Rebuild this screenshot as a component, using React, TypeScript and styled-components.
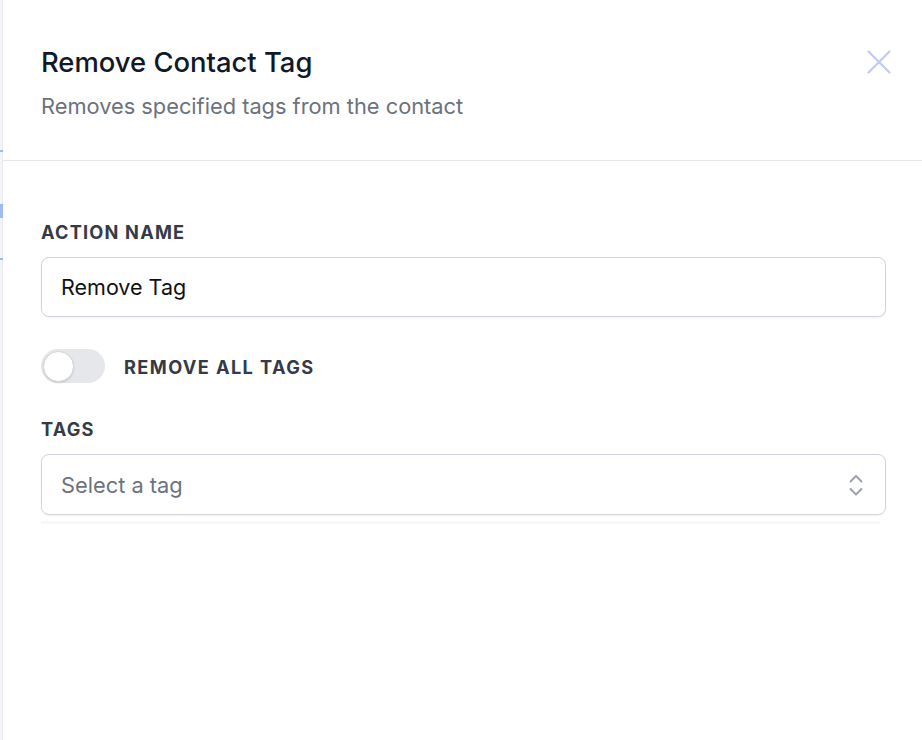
import styled, { createGlobalStyle } from "styled-components";

const GlobalStyle = createGlobalStyle`
  html, body {
    margin: 0;
    padding: 0;
    background: #ffffff;
  }
  body {
    font-family: Inter, "Noto Sans", "Liberation Sans", sans-serif;
    -webkit-font-smoothing: antialiased;
  }
  * {
    box-sizing: border-box;
  }
`;

export default function App() {
  return (
    <>
      <GlobalStyle />
      <Screen>
        <Backdrop>
          <BackdropMark $top={150} $height={2} />
          <BackdropMark $top={52} $height={14} />
          <BackdropMark $top={40} $height={2} />
        </Backdrop>
        <Panel>
          <Header>
            <HeaderText>
              <Title>Remove Contact Tag</Title>
              <Subtitle>Removes specified tags from the contact</Subtitle>
            </HeaderText>
            <CloseButton aria-label="Close">
              <svg width="24" height="24" viewBox="0 0 24 24" fill="none">
                <path
                  d="M1.5 1.5L22.5 22.5M22.5 1.5L1.5 22.5"
                  stroke="currentColor"
                  strokeWidth="2.2"
                  strokeLinecap="round"
                />
              </svg>
            </CloseButton>
          </Header>
          <Body>
            <Field>
              <Label>Action Name</Label>
              <TextInput defaultValue="Remove Tag" />
            </Field>
            <ToggleRow>
              <Toggle role="switch" aria-checked="false">
                <Knob />
              </Toggle>
              <ToggleLabel>Remove All Tags</ToggleLabel>
            </ToggleRow>
            <Field>
              <Label>Tags</Label>
              <SelectBox>
                <Placeholder>Select a tag</Placeholder>
                <svg width="16" height="24" viewBox="0 0 16 24" fill="none">
                  <path
                    d="M2.5 8.5L8 3L13.5 8.5M2.5 16L8 21.5L13.5 16"
                    stroke="#9ca3af"
                    strokeWidth="2"
                    strokeLinecap="round"
                    strokeLinejoin="round"
                  />
                </svg>
              </SelectBox>
              <DropHint />
            </Field>
          </Body>
        </Panel>
      </Screen>
    </>
  );
}

const Screen = styled.div`
  display: flex;
  width: 100%;
  height: 100vh;
  overflow: hidden;
`;

const Backdrop = styled.div`
  width: 3px;
  flex-shrink: 0;
  display: flex;
  flex-direction: column;
  background: #f4f5f9;
  border-right: 1px solid #e8eaf0;
`;

const BackdropMark = styled.div<{ $top: number; $height: number }>`
  margin-top: ${(p) => p.$top}px;
  height: ${(p) => p.$height}px;
  width: 3px;
  background: #7aa2f0;
  opacity: 0.7;
`;

const Panel = styled.div`
  flex: 1;
  display: flex;
  flex-direction: column;
  background: #ffffff;
`;

const Header = styled.div`
  display: flex;
  justify-content: space-between;
  align-items: flex-start;
  padding: 44px 31px 39px 38px;
  border-bottom: 1px solid #e5e7eb;
`;

const HeaderText = styled.div`
  display: flex;
  flex-direction: column;
  gap: 11px;
`;

const Title = styled.h2`
  margin: 0;
  font-size: 27.4px;
  line-height: 36px;
  font-weight: 500;
  color: #111827;
`;

const Subtitle = styled.p`
  margin: 0;
  font-size: 21.8px;
  line-height: 30px;
  color: #6b7280;
`;

const CloseButton = styled.button`
  border: none;
  background: none;
  padding: 0;
  margin-top: 6px;
  color: #c3c8fa;
  cursor: pointer;
  display: flex;
`;

const Body = styled.div`
  display: flex;
  flex-direction: column;
  padding: 59px 36px 0 38px;
`;

const Field = styled.div`
  display: flex;
  flex-direction: column;
`;

const Label = styled.label`
  font-size: 18.2px;
  line-height: 25px;
  font-weight: 700;
  letter-spacing: 1.2px;
  text-transform: uppercase;
  color: #343a46;
  margin-bottom: 12px;
`;

const TextInput = styled.input`
  height: 60px;
  width: 100%;
  padding: 0 19px;
  border: 1px solid #d1d5db;
  border-radius: 8px;
  box-shadow: 0 1px 2px rgba(0, 0, 0, 0.06);
  font-family: inherit;
  font-size: 21.5px;
  color: #111111;
  outline: none;
`;

const ToggleRow = styled.div`
  display: flex;
  align-items: center;
  gap: 19px;
  margin: 32px 0 34px;
`;

const Toggle = styled.div`
  width: 64px;
  height: 34px;
  border-radius: 17px;
  background: #e5e7eb;
  padding: 2px;
  display: flex;
  align-items: center;
`;

const Knob = styled.span`
  width: 31px;
  height: 31px;
  border-radius: 50%;
  background: #ffffff;
  border: 1px solid #d4d6da;
  box-shadow: 0 1px 2px rgba(0, 0, 0, 0.12);
`;

const ToggleLabel = styled.span`
  font-size: 18.2px;
  font-weight: 700;
  letter-spacing: 1.4px;
  text-transform: uppercase;
  color: #343a46;
  margin-top: 2px;
`;

const SelectBox = styled.div`
  height: 61px;
  display: flex;
  align-items: center;
  justify-content: space-between;
  padding: 0 21px 0 19px;
  border: 1px solid #d1d5db;
  border-radius: 8px;
  box-shadow: 0 1px 2px rgba(0, 0, 0, 0.06);
  cursor: pointer;
`;

const Placeholder = styled.span`
  font-size: 21.8px;
  color: #6b7280;
`;

const DropHint = styled.div`
  height: 3px;
  margin: 6px 6px 0 0;
  background: #f7f8fa;
`;
